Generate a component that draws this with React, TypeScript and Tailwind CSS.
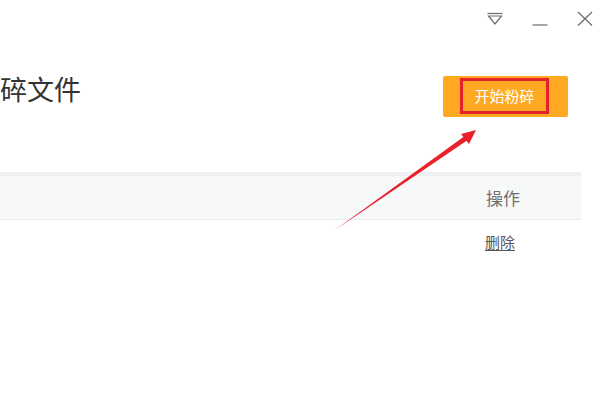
export default function App() {
  return (
    <div
      className="relative w-[600px] h-[400px] overflow-hidden bg-white"
      style={{ fontFamily: '"Noto Sans CJK SC", "Noto Sans", sans-serif' }}
    >
      {/* Window controls */}
      <div className="flex justify-end items-start gap-[29px] pr-[7px] pt-[10px] h-[40px]">
        <svg width="16" height="16" viewBox="0 0 16 16" fill="none" stroke="#6b6b6b" strokeWidth="1.2">
          <line x1="0.5" y1="3.5" x2="15.5" y2="3.5" />
          <path d="M1.5 6 L14.5 6 L8 14 Z" strokeLinejoin="miter" />
        </svg>
        <svg width="16" height="16" viewBox="0 0 16 16" fill="none" stroke="#6b6b6b" strokeWidth="1.2">
          <line x1="0.5" y1="15" x2="15.5" y2="15" />
        </svg>
        <svg width="16" height="16" viewBox="0 0 16 16" fill="none" stroke="#6b6b6b" strokeWidth="1.2">
          <line x1="1" y1="2" x2="15" y2="15.5" />
          <line x1="15" y1="2" x2="1" y2="15.5" />
        </svg>
      </div>

      {/* Title row */}
      <div className="flex items-start justify-between pr-[32px] mt-[36px]">
        <div className="ml-[0px] mt-[-2px] text-[27px] leading-[30px] text-[#333333] whitespace-nowrap">
          碎文件
        </div>
        <button className="w-[125px] h-[41px] rounded-[2px] bg-[#ffa923] flex items-center justify-center">
          <span className="w-[89px] h-[36px] border-[3px] border-[#e8202a] flex items-center justify-center text-[15px] text-white mr-[2px] mt-[-1px]">
            开始粉碎
          </span>
        </button>
      </div>

      {/* Table */}
      <div className="w-[581px] mt-[55px]">
        <div className="flex h-[48px] border-t-4 border-t-[#eeefef] border-b border-b-[#e8ebeb] bg-[#f7f8f8]">
          <div className="flex-1" />
          <div className="w-[95px] flex items-center text-[17px] text-[#6f6f6f]">操作</div>
        </div>
        <div className="flex pt-[12px]">
          <div className="flex-1" />
          <div className="w-[96px] -ml-[1px] text-[15px] leading-[20px] text-[#555555] underline underline-offset-2">
            删除
          </div>
        </div>
      </div>

      {/* Annotation arrow */}
      <svg className="absolute left-0 top-0 pointer-events-none" width="600" height="400" viewBox="0 0 600 400">
        <polygon points="335,230 464,136.5 467,140.5" fill="#e8212b" />
        <polygon points="476,130 461,134 469,144" fill="#e8212b" />
      </svg>
    </div>
  );
}
